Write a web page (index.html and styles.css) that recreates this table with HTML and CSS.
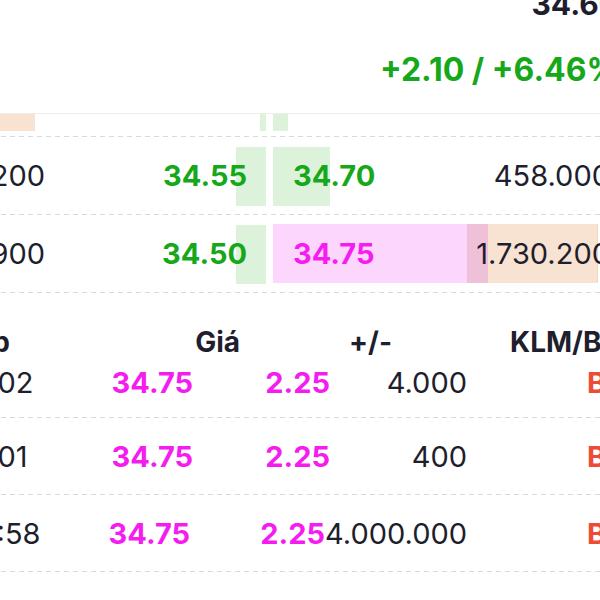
FILE: index.html
```html
<!DOCTYPE html>
<html lang="vi">
<head>
<meta charset="utf-8">
<title>Sổ lệnh</title>
<link rel="stylesheet" href="styles.css">
</head>
<body>
<div class="screen">
  <div class="page">
    <header class="quote">
      <div class="quote-price">34.60</div>
      <div class="quote-change">+2.10 / +6.46%</div>
    </header>

    <section class="book">
      <div class="book-row book-row--cut">
        <div class="cell vol vol--flash" style="--w:115px"></div>
        <div class="cell bid" style="--w:6px"></div>
        <div class="cell ask ask--up" style="--w:15px"></div>
        <div class="cell vol-ask"></div>
      </div>
      <div class="book-row">
        <div class="cell vol">21.200</div>
        <div class="cell bid" style="--w:30px">34.55</div>
        <div class="cell ask ask--up" style="--w:57px">34.70</div>
        <div class="cell vol-ask">458.000</div>
      </div>
      <div class="book-row">
        <div class="cell vol">16.900</div>
        <div class="cell bid" style="--w:30px">34.50</div>
        <div class="cell ask ask--ceil" style="--w:194px">34.75</div>
        <div class="cell vol-ask vol-ask--flash">1.730.200</div>
      </div>
    </section>

    <section class="trades">
      <div class="trades-head">
        <div class="th th-time">TG khớp</div>
        <div class="th th-price">Giá</div>
        <div class="th th-change">+/-</div>
        <div class="th th-vol">KLM/B</div>
      </div>
      <div class="trade trade--first">
        <div class="td td-time">14:30:02</div>
        <div class="td td-price">34.75</div>
        <div class="td td-change">2.25</div>
        <div class="td td-vol">4.000</div>
        <div class="td td-side">B</div>
      </div>
      <div class="trade">
        <div class="td td-time">14:30:01</div>
        <div class="td td-price">34.75</div>
        <div class="td td-change">2.25</div>
        <div class="td td-vol">400</div>
        <div class="td td-side">B</div>
      </div>
      <div class="trade trade--wide">
        <div class="td td-time">14:29:58</div>
        <div class="td td-price">34.75</div>
        <div class="td td-change">2.25</div>
        <div class="td td-vol">4.000.000</div>
        <div class="td td-side">B</div>
      </div>
    </section>
  </div>
</div>
</body>
</html>
```

FILE: styles.css
```css
* { box-sizing: border-box; }

html, body {
  margin: 0;
  padding: 0;
  background: #ffffff;
}

body {
  font-family: Inter, "Noto Sans", sans-serif;
  color: #1e1e2d;
}

.screen {
  width: 600px;
  height: 600px;
  overflow: hidden;
}

.page {
  width: 760px;
  margin-left: -80px;
}

/* ---------- quote header ---------- */
.quote {
  display: flex;
  flex-direction: column;
  align-items: flex-end;
  padding-right: 61px;
  margin-top: -14px;
}

.quote-price {
  font-size: 30px;
  line-height: 36px;
  font-weight: 700;
}

.quote-change {
  margin-top: 28px;
  font-size: 32px;
  line-height: 40px;
  font-weight: 700;
  color: #16a81a;
}

/* ---------- order book ---------- */
.book {
  margin-top: 23px;
  border-top: 1px solid #ededed;
}

.book-row {
  display: grid;
  grid-template-columns: 140px 213px 194px 1fr;
  height: 78px;
  font-size: 29px;
  align-items: stretch;
  background: repeating-linear-gradient(90deg, #d9d9d9 0 5px, transparent 5px 9px) left bottom / 100% 1px no-repeat;
}

.book-row--cut {
  height: 23px;
}

.cell {
  display: flex;
  align-items: center;
  white-space: nowrap;
  padding-bottom: 1px;
}

.vol {
  justify-content: flex-end;
  padding-right: 15px;
}

.vol--flash {
  background: linear-gradient(#f8e2d1, #f8e2d1) left 0 / var(--w) 17px no-repeat;
}

.bid {
  justify-content: flex-end;
  padding-right: 26px;
  font-weight: 700;
  color: #16a81a;
  background: linear-gradient(#dcf2da, #dcf2da) right 7px top 10px / var(--w) 59px no-repeat;
}

.book-row--cut .bid {
  background-position: right 7px top 0;
  background-size: var(--w) 17px;
}

.ask {
  justify-content: flex-start;
  padding-left: 20px;
  font-weight: 700;
}

.ask--up {
  color: #16a81a;
  background: linear-gradient(#dcf2da, #dcf2da) left 10px / var(--w) 59px no-repeat;
}

.book-row--cut .ask--up {
  background-position: left 0;
  background-size: var(--w) 17px;
}

.ask--ceil {
  color: #f51cf0;
  background: linear-gradient(#fdd6fd, #fdd6fd) left 9px / var(--w) 59px no-repeat;
}

.vol-ask {
  justify-content: flex-end;
  padding-right: 70px;
}

.vol-ask--flash {
  background:
    linear-gradient(90deg, #efc1d9 0 21px, #f8e2d1 21px 130px, #f3d6c2 130px 131px, transparent 131px) left 9px / 100% 59px no-repeat;
}

/* ---------- trades ---------- */
.trades {
  margin-top: 32px;
}

.trades-head {
  display: grid;
  grid-template-columns: 90px 230px 152px 1fr;
  height: 30px;
  align-items: center;
  font-size: 28px;
  font-weight: 700;
  white-space: nowrap;
}

.th-time, .th-price, .th-change {
  display: flex;
  justify-content: flex-end;
}

.th-vol {
  padding-left: 118px;
}

.trade {
  display: grid;
  grid-template-columns: 140px 133px 137px 137px 1fr;
  align-items: center;
  line-height: 36px;
  font-size: 29px;
  padding: 21px 0 20px;
  white-space: nowrap;
  background: repeating-linear-gradient(90deg, #d9d9d9 0 5px, transparent 5px 9px) left bottom / 100% 1px no-repeat;
}

.trade--first {
  padding: 10px 0 17px;
}

.trade--wide {
  grid-template-columns: 140px 130px 135px 142px 1fr;
}

.td-time {
  margin-left: -6px;
}

.trade--wide .td-time {
  margin-left: 2px;
}

.td-price, .td-change {
  text-align: right;
  font-weight: 700;
  color: #f51cf0;
}

.td-vol {
  text-align: right;
}

.td-side {
  padding-left: 120px;
  font-weight: 700;
  color: #ee4b36;
}
```
